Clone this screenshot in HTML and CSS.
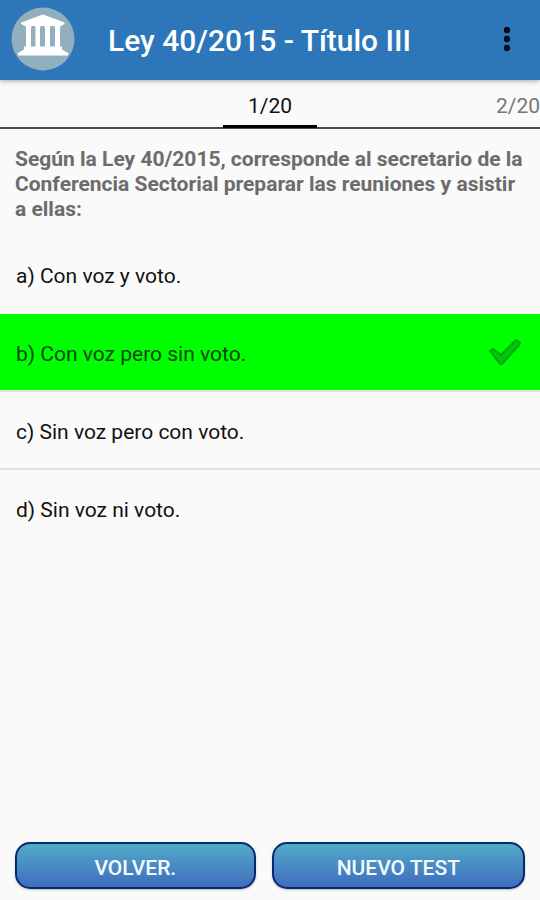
FILE: index.html
```html
<!DOCTYPE html>
<html lang="es">
<head>
<meta charset="utf-8">
<meta name="viewport" content="width=device-width, initial-scale=1">
<title>Ley 40/2015 - Título III</title>
<link rel="stylesheet" href="styles.css">
</head>
<body>
<header class="bar">
  <svg class="logo" viewBox="0 0 64 64" aria-hidden="true">
    <circle cx="32" cy="32" r="31.5" fill="#92afbd"/>
    <g fill="#fff">
      <path d="M32 7.500 53.500 15.500V17L50 19H14L10 17V15.500Z"/>
      <path d="M14 18H21L20 21V40H15V21Z"/>
      <path d="M23.500 18H30L29 21V40H24.500V21Z"/>
      <path d="M33 18H40L39 21V40H34V21Z"/>
      <path d="M43 18H50L49 21V40H44V21Z"/>
      <path d="M13 39.500H51V42.500L57 46V48.500H7V46L13 42.500Z"/>
    </g>
  </svg>
  <h1 class="title">Ley 40/2015 - Título III</h1>
  <button class="menu" type="button" aria-label="Más opciones">
    <svg viewBox="0 0 8 26" width="8" height="26" fill="#060a1c"><circle cx="4" cy="4" r="3.2"/><circle cx="4" cy="13" r="3.2"/><circle cx="4" cy="22" r="3.2"/></svg>
  </button>
</header>
<nav class="tabs">
  <a class="tab current" href="#p1">1/20</a>
  <a class="tab next" href="#p2">2/20</a>
</nav>
<main class="content" id="p1">
  <h2 class="question">Según la Ley 40/2015, corresponde al secretario de la Conferencia Sectorial preparar las reuniones y asistir a ellas:</h2>
  <ul class="options">
    <li><button class="option" type="button">a) Con voz y voto.</button></li>
    <li><button class="option correct" type="button">b) Con voz pero sin voto.
      <svg class="check" viewBox="0 0 34 30" aria-hidden="true"><path d="M2 12 5 10 13 16 28 1 32 3.500 31 6 14 25H12Z" fill="#00ca08" stroke="#00a80e" stroke-width="2" stroke-linejoin="round"/></svg>
    </button></li>
    <li><button class="option" type="button">c) Sin voz pero con voto.</button></li>
    <li><button class="option" type="button">d) Sin voz ni voto.</button></li>
  </ul>
</main>
<footer class="actions">
  <button class="action back" type="button">VOLVER.</button>
  <button class="action new" type="button">NUEVO TEST</button>
</footer>
</body>
</html>
```
FILE: styles.css
```css
* { box-sizing: border-box; }
body {
  margin: 0;
  min-height: 100vh;
  display: flex;
  flex-direction: column;
  background: #fafafa;
  color: #111;
  font-family: Roboto, "Liberation Sans", sans-serif;
}
button { font: inherit; color: inherit; border: 0; background: none; }
.bar {
  display: flex;
  align-items: center;
  height: 80px;
  padding: 0 22px 2px 11px;
  background: #2d76ba;
  box-shadow: 0 1px 5px rgba(0, 0, 0, .35);
}
.logo { width: 64px; height: 64px; flex: none; }
.title {
  flex: 1;
  margin: 4px 0 0 33px;
  color: #fff;
  font-size: 30px;
  font-weight: 500;
  line-height: 36px;
}
.menu { display: flex; padding: 0 7px; }
.tabs {
  display: grid;
  grid-template-columns: 1fr 94px 1fr;
  height: 49px;
  border-bottom: 2px solid #4c4c4c;
}
.tab {
  color: #777;
  font-size: 21px;
  line-height: 53px;
  text-decoration: none;
}
.current {
  grid-column: 2;
  height: 48px;
  color: #111;
  text-align: center;
  border-bottom: 3px solid #000;
}
.next { text-align: right; }
.content { flex: 1; }
.question {
  margin: 0;
  padding: 18px 15px 14px;
  color: #6c6c6c;
  font-size: 21px;
  font-weight: 700;
  line-height: 25px;
}
.options { margin: 0; padding: 0; list-style: none; }
.options li { border-bottom: 2px solid #e2e2e2; }
.options li:first-child, .options li:last-child { border-color: transparent; }
.option {
  display: flex;
  align-items: center;
  justify-content: space-between;
  width: 100%;
  height: 76px;
  padding: 3px 18px 0 16px;
  font-size: 21px;
  text-align: left;
}
.correct { background: #0f0; color: #06470a; }
.check { width: 34px; height: 30px; }
.actions { display: flex; gap: 16px; padding: 0 15px 11px; }
.action {
  height: 47px;
  padding: 4px 0 0;
  border: 2px solid #062a70;
  border-radius: 15px;
  background: linear-gradient(#52abc9, #3f6cbd);
  box-shadow: 0 1px 2px rgba(0, 0, 0, .25);
  color: #f4fbff;
  font-size: 21px;
  font-weight: 500;
}
.back { flex: 241 1 0; }
.new { flex: 254 1 0; }
```
